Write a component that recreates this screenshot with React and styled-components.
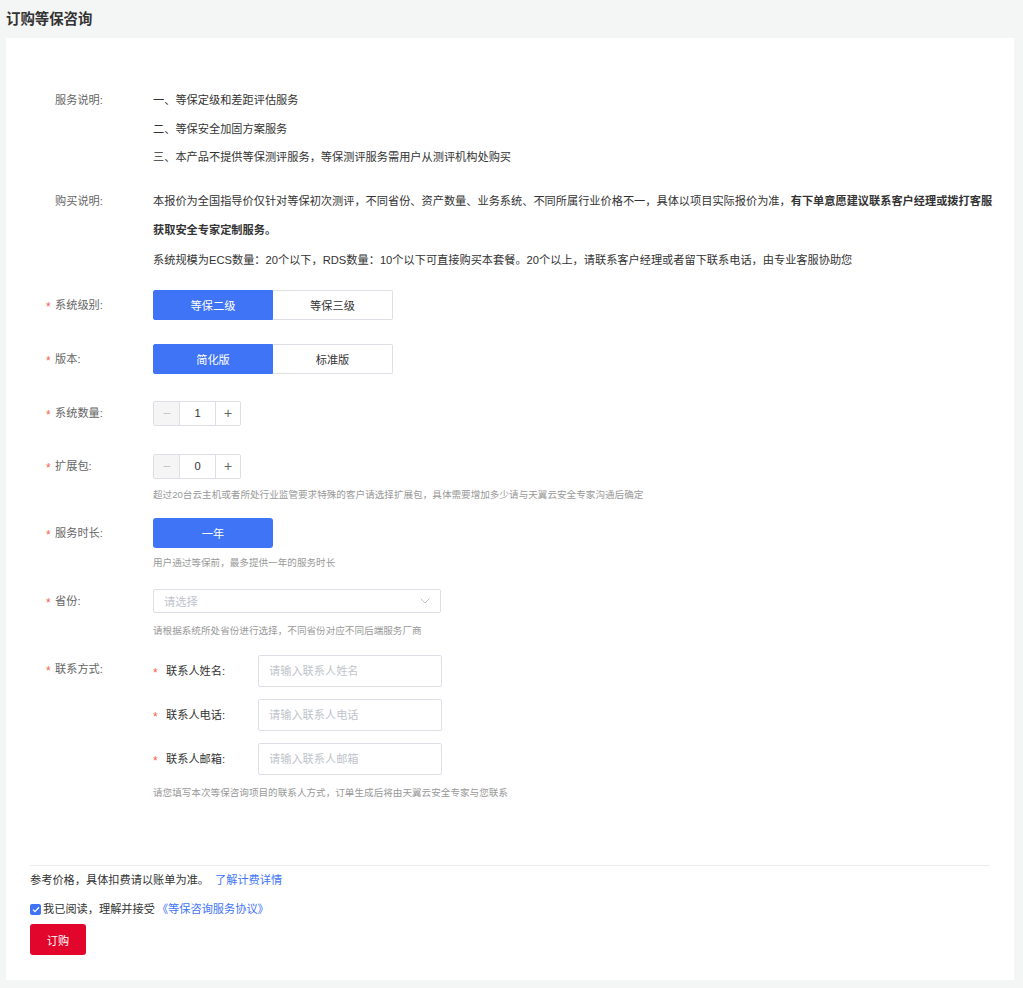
import React from "react";
import styled, { createGlobalStyle } from "styled-components";

const FONT = `"Liberation Sans", "Noto Sans CJK SC", sans-serif`;
const BLUE = "#3f74f6";
const BORDER = "#dcdfe6";

const GlobalStyle = createGlobalStyle`
  html, body { margin: 0; padding: 0; background: #f4f5f5; }
  body { font-family: ${FONT}; color: #333; }
  * { box-sizing: border-box; }
  button, input { font-family: ${FONT}; }
`;

const Page = styled.div`
  padding: 0 9px 8px 6px;
`;

const Header = styled.div`
  height: 38px;
  padding-bottom: 4px;
  display: flex;
  align-items: center;
  font-size: 14.4px;
  font-weight: bold;
  color: #333;
`;

const Panel = styled.div`
  background: #fff;
  padding-bottom: 25px;
`;

const Form = styled.div`
  padding: 48px 16px 62px 40px;
`;

const Row = styled.div`
  display: flex;
  align-items: flex-start;
  margin-bottom: ${(p) => p.$mb ?? 0}px;
`;

const Label = styled.div`
  width: 107px;
  flex-shrink: 0;
  display: flex;
  font-size: 11.2px;
  line-height: ${(p) => p.$lh}px;
  color: #666;
  white-space: nowrap;
`;

const Star = styled.span`
  width: ${(p) => p.$w ?? 9}px;
  flex-shrink: 0;
  font-size: 12px;
  transform: translateY(2px);
  color: #f5624f;
`;

const Content = styled.div`
  flex: 1;
  min-width: 0;
  font-size: 11.2px;
  color: #333;
`;

const Line = styled.div`
  line-height: ${(p) => p.$lh}px;
`;

const Strong = styled.b`
  font-weight: bold;
`;

const Control = styled.div`
  height: ${(p) => p.$h ?? 30}px;
  display: flex;
  align-items: center;
`;

const Hint = styled.div`
  margin-top: ${(p) => p.$mt}px;
  font-size: 9.6px;
  line-height: 20px;
  color: #999;
  white-space: nowrap;
`;

const Segments = styled.div`
  display: flex;
`;

const Segment = styled.button`
  width: 120px;
  height: 30px;
  margin: 0;
  padding: 0;
  font-size: 11.2px;
  cursor: pointer;
  border: 1px solid ${(p) => (p.$active ? BLUE : BORDER)};
  background: ${(p) => (p.$active ? BLUE : "#fff")};
  color: ${(p) => (p.$active ? "#fff" : "#333")};
  border-radius: ${(p) => (p.$first ? "2px 0 0 2px" : p.$last ? "0 2px 2px 0" : "0")};
  & + & { border-left: none; }
`;

const PrimaryButton = styled.button`
  width: 120px;
  height: 30px;
  border: none;
  border-radius: 3px;
  background: ${BLUE};
  color: #fff;
  font-size: 11.2px;
  padding: 0;
`;

const Stepper = styled.div`
  display: flex;
  height: 25px;
  border: 1px solid ${BORDER};
  border-radius: 2px;
`;

const StepBtn = styled.div`
  width: ${(p) => p.$w}px;
  display: flex;
  align-items: center;
  justify-content: center;
  background: ${(p) => (p.$disabled ? "#f5f5f5" : "#fff")};
  color: ${(p) => (p.$disabled ? "#c8c8c8" : "#666")};
  font-size: 14px;
  & + & { border-left: 1px solid ${BORDER}; }
`;

const StepValue = styled(StepBtn)`
  font-size: 11.2px;
  color: #333;
`;

const Select = styled.div`
  width: 288px;
  height: 24px;
  border: 1px solid ${BORDER};
  border-radius: 2px;
  display: flex;
  align-items: center;
  justify-content: space-between;
  padding: 0 10px 0 10px;
  font-size: 11.2px;
  color: #c0c4cc;
`;

const ContactList = styled.div`
  display: flex;
  flex-direction: column;
  gap: 12px;
`;

const SubRow = styled.div`
  display: flex;
  align-items: center;
`;

const SubLabel = styled.div`
  width: 105px;
  display: flex;
  font-size: 11.2px;
  line-height: 20px;
  color: #333;
  white-space: nowrap;
`;

const TextInput = styled.input`
  width: 184px;
  height: 32px;
  border: 1px solid ${BORDER};
  border-radius: 2px;
  padding: 0 10px;
  font-size: 11.2px;
  color: #333;
  outline: none;
  &::placeholder { color: #c0c4cc; }
`;

const Footer = styled.div`
  padding: 0 24px;
`;

const Divider = styled.div`
  height: 1px;
  background: #ebecf0;
`;

const FootLine = styled.div`
  margin-top: ${(p) => p.$mt}px;
  display: flex;
  align-items: center;
  font-size: 11.2px;
  line-height: 20px;
  color: #333;
`;

const Link = styled.a`
  color: ${BLUE};
  text-decoration: none;
  margin-left: ${(p) => p.$ml ?? 0}px;
`;

const Check = styled.span`
  width: 11px;
  height: 11px;
  border-radius: 2px;
  background: ${BLUE};
  display: inline-flex;
  align-items: center;
  justify-content: center;
  margin-right: 2px;
`;

const BuyButton = styled.button`
  margin-top: 5px;
  width: 56px;
  height: 31px;
  border: none;
  border-radius: 3px;
  background: #e2062d;
  color: #fff;
  font-size: 11.2px;
  padding: 0;
`;

function FieldLabel({ children, required, lh }) {
  return (
    <Label $lh={lh}>
      <Star>{required ? "*" : ""}</Star>
      {children}
    </Label>
  );
}

const contacts = [
  ["联系人姓名:", "请输入联系人姓名"],
  ["联系人电话:", "请输入联系人电话"],
  ["联系人邮箱:", "请输入联系人邮箱"],
];

export default function App() {
  return (
    <Page>
      <GlobalStyle />
      <Header>订购等保咨询</Header>
      <Panel>
        <Form>
          <Row $mb={15}>
            <FieldLabel lh={28.5}>服务说明:</FieldLabel>
            <Content>
              <Line $lh={28.5}>一、等保定级和差距评估服务</Line>
              <Line $lh={28.5}>二、等保安全加固方案服务</Line>
              <Line $lh={28.5}>三、本产品不提供等保测评服务，等保测评服务需用户从测评机构处购买</Line>
            </Content>
          </Row>

          <Row $mb={15}>
            <FieldLabel lh={29.5}>购买说明:</FieldLabel>
            <Content>
              <Line $lh={29.5}>
                本报价为全国指导价仅针对等保初次测评，不同省份、资产数量、业务系统、不同所属行业价格不一，具体以项目实际报价为准，
                <Strong>有下单意愿建议联系客户经理或拨打客服获取安全专家定制服务。</Strong>
              </Line>
              <Line $lh={29.5}>
                系统规模为ECS数量：20个以下，RDS数量：10个以下可直接购买本套餐。20个以上，请联系客户经理或者留下联系电话，由专业客服协助您
              </Line>
            </Content>
          </Row>

          <Row $mb={24}>
            <FieldLabel required lh={30}>系统级别:</FieldLabel>
            <Segments>
              <Segment $active $first>等保二级</Segment>
              <Segment $last>等保三级</Segment>
            </Segments>
          </Row>

          <Row $mb={24}>
            <FieldLabel required lh={30}>版本:</FieldLabel>
            <Segments>
              <Segment $active $first>简化版</Segment>
              <Segment $last>标准版</Segment>
            </Segments>
          </Row>

          <Row $mb={23}>
            <FieldLabel required lh={30}>系统数量:</FieldLabel>
            <Control>
              <Stepper>
                <StepBtn $w={25} $disabled>−</StepBtn>
                <StepValue $w={36}>1</StepValue>
                <StepBtn $w={25}>+</StepBtn>
              </Stepper>
            </Control>
          </Row>

          <Row $mb={13}>
            <FieldLabel required lh={30}>扩展包:</FieldLabel>
            <Content>
              <Control>
                <Stepper>
                  <StepBtn $w={25} $disabled>−</StepBtn>
                  <StepValue $w={36}>0</StepValue>
                  <StepBtn $w={25}>+</StepBtn>
                </Stepper>
              </Control>
              <Hint $mt={4}>
                超过20台云主机或者所处行业监管要求特殊的客户请选择扩展包，具体需要增加多少请与天翼云安全专家沟通后确定
              </Hint>
            </Content>
          </Row>

          <Row $mb={13}>
            <FieldLabel required lh={30}>服务时长:</FieldLabel>
            <Content>
              <PrimaryButton>一年</PrimaryButton>
              <Hint $mt={5}>用户通过等保前，最多提供一年的服务时长</Hint>
            </Content>
          </Row>

          <Row $mb={14}>
            <FieldLabel required lh={30}>省份:</FieldLabel>
            <Content>
              <Control>
                <Select>
                  <span>请选择</span>
                  <svg width="10" height="6" viewBox="0 0 10 6">
                    <polyline points="0.5,0.5 5,5 9.5,0.5" fill="none" stroke="#c0c4cc" strokeWidth="1" />
                  </svg>
                </Select>
              </Control>
              <Hint $mt={5}>请根据系统所处省份进行选择，不同省份对应不同后端服务厂商</Hint>
            </Content>
          </Row>

          <Row>
            <FieldLabel required lh={28}>联系方式:</FieldLabel>
            <Content>
              <ContactList>
                {contacts.map(([label, ph]) => (
                  <SubRow key={label}>
                    <SubLabel>
                      <Star $w={13}>*</Star>
                      {label}
                    </SubLabel>
                    <TextInput placeholder={ph} />
                  </SubRow>
                ))}
              </ContactList>
              <Hint $mt={8}>请您填写本次等保咨询项目的联系人方式，订单生成后将由天翼云安全专家与您联系</Hint>
            </Content>
          </Row>
        </Form>

        <Footer>
          <Divider />
          <FootLine $mt={4}>
            参考价格，具体扣费请以账单为准。
            <Link $ml={6} href="#">了解计费详情</Link>
          </FootLine>
          <FootLine $mt={9}>
            <Check>
              <svg width="8" height="7" viewBox="0 0 8 7">
                <polyline points="1,3.6 3,5.6 7,1.2" fill="none" stroke="#fff" strokeWidth="1.3" />
              </svg>
            </Check>
            我已阅读，理解并接受
            <Link $ml={2} href="#">《等保咨询服务协议》</Link>
          </FootLine>
          <BuyButton>订购</BuyButton>
        </Footer>
      </Panel>
    </Page>
  );
}
